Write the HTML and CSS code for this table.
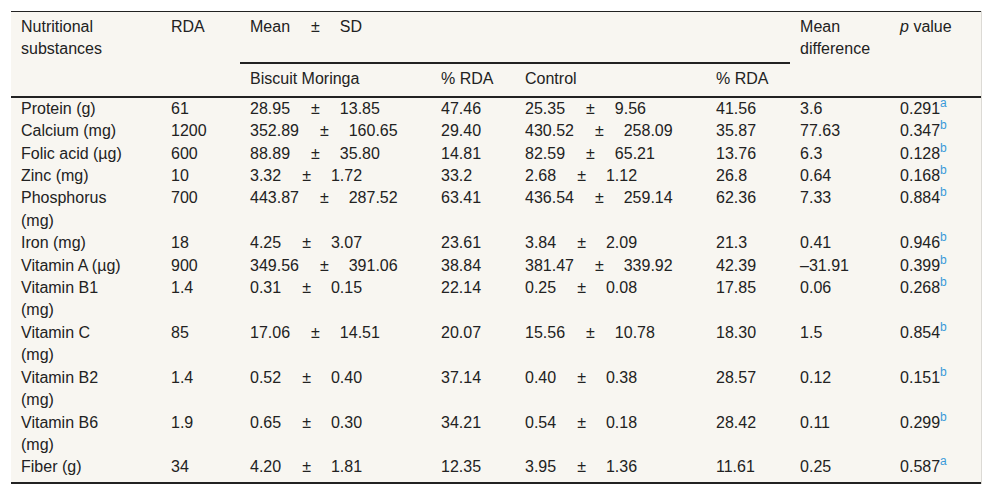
FILE: index.html
```html
<!DOCTYPE html>
<html lang="en">
<head>
<meta charset="utf-8">
<title>Nutritional substances</title>
<link rel="stylesheet" href="styles.css">
</head>
<body>
<div class="wrap">
<table class="tbl">
<colgroup>
<col class="c1"><col class="c2"><col class="c3"><col class="c4"><col class="c5"><col class="c6"><col class="c7"><col class="c8">
</colgroup>
<thead>
<tr class="h1">
<th rowspan="2" class="first">Nutritional substances</th>
<th rowspan="2">RDA</th>
<th colspan="4" class="group">Mean<span class="pm">±</span>SD</th>
<th rowspan="2">Mean difference</th>
<th rowspan="2"><i>p</i> value</th>
</tr>
<tr class="h2">
<th>Biscuit Moringa</th>
<th>% RDA</th>
<th>Control</th>
<th>% RDA</th>
</tr>
</thead>
<tbody>
<tr><td class="first">Protein (g)</td><td>61</td><td>28.95<span class="pm">±</span>13.85</td><td>47.46</td><td>25.35<span class="pm">±</span>9.56</td><td>41.56</td><td>3.6</td><td>0.291<sup>a</sup></td></tr>
<tr><td class="first">Calcium (mg)</td><td>1200</td><td>352.89<span class="pm">±</span>160.65</td><td>29.40</td><td>430.52<span class="pm">±</span>258.09</td><td>35.87</td><td>77.63</td><td>0.347<sup>b</sup></td></tr>
<tr><td class="first">Folic acid (µg)</td><td>600</td><td>88.89<span class="pm">±</span>35.80</td><td>14.81</td><td>82.59<span class="pm">±</span>65.21</td><td>13.76</td><td>6.3</td><td>0.128<sup>b</sup></td></tr>
<tr><td class="first">Zinc (mg)</td><td>10</td><td>3.32<span class="pm">±</span>1.72</td><td>33.2</td><td>2.68<span class="pm">±</span>1.12</td><td>26.8</td><td>0.64</td><td>0.168<sup>b</sup></td></tr>
<tr><td class="first">Phosphorus (mg)</td><td>700</td><td>443.87<span class="pm">±</span>287.52</td><td>63.41</td><td>436.54<span class="pm">±</span>259.14</td><td>62.36</td><td>7.33</td><td>0.884<sup>b</sup></td></tr>
<tr><td class="first">Iron (mg)</td><td>18</td><td>4.25<span class="pm">±</span>3.07</td><td>23.61</td><td>3.84<span class="pm">±</span>2.09</td><td>21.3</td><td>0.41</td><td>0.946<sup>b</sup></td></tr>
<tr><td class="first">Vitamin A (µg)</td><td>900</td><td>349.56<span class="pm">±</span>391.06</td><td>38.84</td><td>381.47<span class="pm">±</span>339.92</td><td>42.39</td><td>–31.91</td><td>0.399<sup>b</sup></td></tr>
<tr><td class="first">Vitamin B1 (mg)</td><td>1.4</td><td>0.31<span class="pm">±</span>0.15</td><td>22.14</td><td>0.25<span class="pm">±</span>0.08</td><td>17.85</td><td>0.06</td><td>0.268<sup>b</sup></td></tr>
<tr><td class="first">Vitamin C (mg)</td><td>85</td><td>17.06<span class="pm">±</span>14.51</td><td>20.07</td><td>15.56<span class="pm">±</span>10.78</td><td>18.30</td><td>1.5</td><td>0.854<sup>b</sup></td></tr>
<tr><td class="first">Vitamin B2 (mg)</td><td>1.4</td><td>0.52<span class="pm">±</span>0.40</td><td>37.14</td><td>0.40<span class="pm">±</span>0.38</td><td>28.57</td><td>0.12</td><td>0.151<sup>b</sup></td></tr>
<tr><td class="first">Vitamin B6 (mg)</td><td>1.9</td><td>0.65<span class="pm">±</span>0.30</td><td>34.21</td><td>0.54<span class="pm">±</span>0.18</td><td>28.42</td><td>0.11</td><td>0.299<sup>b</sup></td></tr>
<tr class="last"><td class="first">Fiber (g)</td><td>34</td><td>4.20<span class="pm">±</span>1.81</td><td>12.35</td><td>3.95<span class="pm">±</span>1.36</td><td>11.61</td><td>0.25</td><td>0.587<sup>a</sup></td></tr>
</tbody>
</table>
</div>
</body>
</html>
```
FILE: styles.css
```css
html, body {
  margin: 0;
  padding: 0;
  background: #ffffff;
}

body {
  font-family: "Liberation Sans", Arial, sans-serif;
  font-size: 16px;
  line-height: 22.4px;
  color: #222222;
}

.wrap {
  width: 970px;
  margin: 11px 0 0 11px;
  background: #f8f6f1;
  border-right: 1px solid #dcdad5;
}

.tbl {
  width: 970px;
  table-layout: fixed;
  border-collapse: collapse;
  border-spacing: 0;
  border-top: 1px solid #222222;
  border-bottom: 2px solid #222222;
}

.c1 { width: 150px; }
.c2 { width: 79px; }
.c3 { width: 191px; }
.c4 { width: 84px; }
.c5 { width: 191px; }
.c6 { width: 84px; }
.c7 { width: 100px; }
.c8 { width: 91px; }

th, td {
  text-align: left;
  vertical-align: top;
  font-weight: normal;
  padding: 0 10px;
}

.h1 th {
  padding-top: 4px;
  padding-bottom: 4px;
}

.h1 th.group {
  padding-bottom: 24px;
  border-bottom: 2px solid #222222;
}

.h2 th {
  padding-top: 4px;
  padding-bottom: 5px;
}

thead {
  border-bottom: 2px solid #222222;
}

th.first, td.first {
  padding-right: 36px;
}

.last td {
  padding-bottom: 3px;
}

.pm {
  margin: 0 20px 0 21px;
}

sup {
  font-size: 12px;
  line-height: 0;
  vertical-align: 7px;
  color: #3a9ad9;
}
```
